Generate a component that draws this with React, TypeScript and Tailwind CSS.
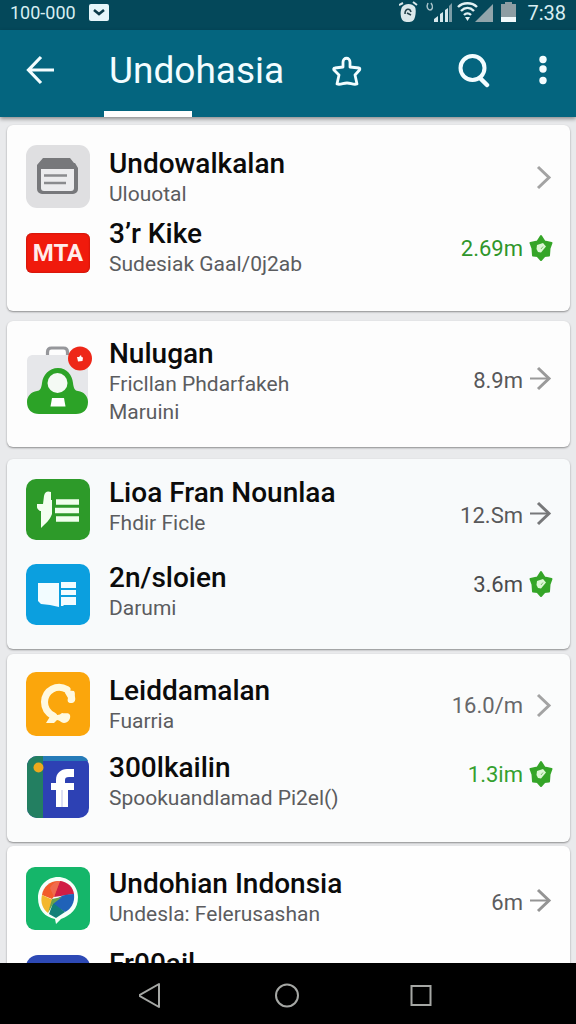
import type { ReactNode } from "react";

type Mark = "chevron" | "arrow" | "badge";

type Entry = {
  title: string;
  lines: string[];
  icon: ReactNode;
  iconPad: string;
  value?: string;
  valueColor?: string;
  mark?: Mark;
  markColor?: string;
  markPad?: string;
};

type Group = { id: string; className: string; entries: Entry[] };

function FolderIcon() {
  return (
    <svg className="block h-16 w-16" viewBox="0 0 64 64" aria-hidden="true">
      <rect width="64" height="63" rx="11" fill="#dfdfe1" />
      <path d="M17 13h27l4 5h1l3 5v21a5 5 0 0 1-5 5H16a5 5 0 0 1-5-5V20z" fill="#77787b" />
      <path d="M15 24h33v19a3 3 0 0 1-3 3H18a3 3 0 0 1-3-3z" fill="#ececee" />
      <path d="M18 30.500h23M18 38h22" stroke="#8a8b8e" strokeWidth="2.500" />
    </svg>
  );
}

function MtaIcon() {
  return (
    <span className="flex h-10 w-16 items-center justify-center rounded-md bg-[#f01a0c] text-2xl font-bold text-[#ffeceb] shadow-[inset_0_0_2px_#a01008]">
      MTA
    </span>
  );
}

function PersonIcon() {
  return (
    <svg className="block h-[70px] w-[66px]" viewBox="0 0 66 70" aria-hidden="true">
      <path d="M6 10h50a6 6 0 0 1 6 6v42H1V16a6 6 0 0 1 5-6z" fill="#e6e7ea" />
      <path d="M21.500 10V7c0-2.500 1-4 4-4h12c3 0 4 1.500 4 4v3" fill="none" stroke="#96979b" strokeWidth="3.200" />
      <path d="M32 23c9 0 14 7 15 15 .5 5 2 8 5 8 6 1 10 5 10 11 0 8-5 12-12 12H13C6 69 1 65 1 57c0-6 4-10 10-11 3 0 4.500-3 5-8 1-8 7-15 16-15z" fill="#2ca327" />
      <circle cx="31.500" cy="38" r="10" fill="#f4faf4" />
      <path d="M26 53h12l1.500 8.500h-15z" fill="#fff" />
      <circle cx="54" cy="13.500" r="12" fill="#ee2718" />
      <path d="M51 12h2l2-2 .5 2 1.500.5-.5 3.500-4.500.5z" fill="#fff" />
    </svg>
  );
}

function GreenListIcon() {
  return (
    <svg className="block h-16 w-16" viewBox="0 0 64 64" aria-hidden="true">
      <rect y="1" width="64" height="61" rx="10" fill="#2d9a29" />
      <path d="M18 18c1-5 4-5 7-4v8h1v14c-2 6-6 9-11 14v-17h-1c-1-1-3-2-3-4v-3h6z" fill="#f3fff0" />
      <path d="M30 24h23M29 32.500h24M30 41h23" stroke="#f0ffec" strokeWidth="5.500" />
    </svg>
  );
}

function BlueBookIcon() {
  return (
    <svg className="block h-16 w-16" viewBox="0 0 64 64" aria-hidden="true">
      <rect y="1" width="64" height="61" rx="10" fill="#0b9fdf" />
      <path d="M12 20h21v24l-9-2-9-1-3-3z" fill="#f2fcff" />
      <path d="M35 19h15v6H35zM35 27h15v5H35zM35 34h15v8H38l-1 1h-2z" fill="#f2fcff" />
    </svg>
  );
}

function OrangeIcon() {
  return (
    <svg className="block h-16 w-16" viewBox="0 0 64 64" aria-hidden="true">
      <rect width="64" height="64" rx="10" fill="#fba60c" />
      <path
        d="M41 17.500C31 12 19 18 18.500 30c0 6 3 11 9 14"
        fill="none"
        stroke="#fff9df"
        strokeWidth="7"
        strokeLinecap="round"
      />
      <path
        d="M40 14l3 4.500 5 .5c1.500 2 .5 4 1 6 1 4-1 6-4 6s-4-2-3-5l-3-5zM25 41c4 2 8 3 11 0 4 1 6-1 8 2 1 4-2 8-6 8-3 0-4-3-7-3l-3 3h-8l5-8z"
        fill="#fff9df"
      />
    </svg>
  );
}

function FacebookIcon() {
  return (
    <svg className="block h-16 w-16" viewBox="0 0 64 64" aria-hidden="true">
      <path d="M11 1h42a10 10 0 0 1 10 10v42a10 10 0 0 1-10 10H11A10 10 0 0 1 1 53V11A10 10 0 0 1 11 1z" fill="#2d41b4" />
      <path d="M17 1h36c5 0 8 2 9 5H17z" fill="#267bb8" />
      <path d="M11 1h6v62h-6A10 10 0 0 1 1 53V11A10 10 0 0 1 11 1z" fill="#237f61" />
      <circle cx="12.500" cy="12.500" r="5" fill="#eda91d" />
      <path d="M30 52V35h-5v-7h5v-3c0-7 5-11 11-11h7v8h-5c-3 0-4 1-4 3v3h9v7h-6v17z" fill="#fff" />
      <path d="M36 35v17" stroke="#a9b0e2" strokeWidth=".8" />
    </svg>
  );
}

function PinwheelIcon() {
  return (
    <svg className="block h-16 w-16" viewBox="0 0 64 64" aria-hidden="true">
      <rect width="64" height="63" rx="9" fill="#15b66a" />
      <path d="M32 10c11 0 20 9 20 20 0 12-7 18-17 22l-5 5-1-5c-10-2-17-9-17-21 0-12 9-21 20-21z" fill="#f6fff9" />
      <path d="M32 14c-8 0-15 6-16 14l10 4 13-16a16 16 0 0 0-7-2z" fill="#f25c2a" />
      <path d="M34 14c8 1 13 6 14 13l-20 3z" fill="#d01e45" />
      <path d="M34 14l-6 16-4-9c2-4 6-7 10-7z" fill="#f06a4c" />
      <path d="M48 27c1 9-3 15-9 18l-13-8c5-6 10-10 22-10z" fill="#2062b8" />
      <path d="M27 36l12 9-9 6-7-4z" fill="#118078" />
      <path d="M16 28l11 5-5 13c-5-4-8-10-6-18z" fill="#f3b72c" />
      <path d="M26 32l-4 14 5-9 9-7z" fill="#6aa24b" />
    </svg>
  );
}

function BlueIcon() {
  return <span className="block h-16 w-16 rounded-xl bg-[#2d49b5]" />;
}

function MarkIcon({ mark, color }: { mark: Mark; color: string }) {
  if (mark === "badge") {
    return (
      <svg className="h-7 w-6 shrink-0" viewBox="0 0 24 28" aria-hidden="true">
        <path
          d="M12 2l3.500 5.500L22.500 9l-2 5.500L20 21.500l-4.500.5-3.500 4-3.500-4-4.500-.5-.5-7L1.500 9l7-1.500z"
          fill="#35a528"
          stroke="#35a528"
          strokeWidth="2"
          strokeLinejoin="round"
        />
        <path d="M8 11l6-2 3 3.500-5 6-3-.5-1.500-3z" fill="#dcf7d4" />
        <path d="M12 15l2-2.500" stroke="#79bf6c" strokeWidth="1" />
      </svg>
    );
  }
  return (
    <svg className={`h-7 w-6 shrink-0 ${color}`} viewBox="0 0 24 28" fill="none" stroke="currentColor" strokeWidth="3" aria-hidden="true">
      {mark === "arrow" ? (
        <>
          <path d="M1 12.500h18" strokeWidth="2" />
          <path d="M9 2l11 10.500L9 23" />
        </>
      ) : (
        <path d="M9 4l11 10.500L9 25" />
      )}
    </svg>
  );
}

const groups: Group[] = [
  {
    id: "a",
    className: "mt-2 gap-1 pt-[18px] pb-[33px] bg-[#fdfdfd]",
    entries: [
      { title: "Undowalkalan", lines: ["Ulouotal"], icon: <FolderIcon />, iconPad: "pt-0.5", mark: "chevron", markColor: "text-[#a3a3a3]", markPad: "pt-5" },
      { title: "3’r Kike", lines: ["Sudesiak Gaal/0j2ab"], icon: <MtaIcon />, iconPad: "pt-5", value: "2.69m", valueColor: "text-[#2f962b]", mark: "badge", markPad: "pt-5" },
    ],
  },
  {
    id: "b",
    className: "mt-2.5 pt-3 pb-[21px] bg-[#fdfdfd]",
    entries: [
      { title: "Nulugan", lines: ["Fricllan Phdarfakeh", "Maruini"], icon: <PersonIcon />, iconPad: "pt-3", value: "8.9m", valueColor: "text-[#58585a]", mark: "arrow", markColor: "text-[#9a9a9a]", markPad: "pt-8" },
    ],
  },
  {
    id: "c",
    className: "mt-3 gap-[15px] pt-[13px] pb-[22px] bg-[#f8fafb]",
    entries: [
      { title: "Lioa Fran Nounlaa", lines: ["Fhdir Ficle"], icon: <GreenListIcon />, iconPad: "pt-1.5", value: "12.Sm", valueColor: "text-[#58585a]", mark: "arrow", markColor: "text-[#77787a]", markPad: "pt-7" },
      { title: "2n/sloien", lines: ["Darumi"], icon: <BlueBookIcon />, iconPad: "pt-1.5", value: "3.6m", valueColor: "text-[#4a4a4c]", mark: "badge", markPad: "pt-3" },
    ],
  },
  {
    id: "d",
    className: "mt-[5px] gap-[11px] pt-4 pb-[23px] bg-[#fbfcfc]",
    entries: [
      { title: "Leiddamalan", lines: ["Fuarria"], icon: <OrangeIcon />, iconPad: "pt-0.5", value: "16.0/m", valueColor: "text-[#66676a]", mark: "chevron", markColor: "text-[#a3a3a3]", markPad: "pt-5" },
      { title: "300lkailin", lines: ["Spookuandlamad Pi2el()"], icon: <FacebookIcon />, iconPad: "pt-2", value: "1.3im", valueColor: "text-[#35a02f]", mark: "badge", markPad: "pt-3" },
    ],
  },
  {
    id: "e",
    className: "mt-1 gap-3 pt-[17px] pb-6 bg-[#fefefe]",
    entries: [
      { title: "Undohian Indonsia", lines: ["Undesla: Felerusashan"], icon: <PinwheelIcon />, iconPad: "pt-1", value: "6m", valueColor: "text-[#5c5c5e]", mark: "arrow", markColor: "text-[#949494]", markPad: "pt-6" },
      { title: "Fr00ail", lines: [], icon: <BlueIcon />, iconPad: "pt-3" },
    ],
  },
];

function Row({ entry }: { entry: Entry }) {
  return (
    <li className="flex items-start">
      <div className={`w-[83px] shrink-0 ${entry.iconPad}`}>{entry.icon}</div>
      <div className="min-w-0 flex-1 pt-[5px]">
        <h2 className="truncate text-[28px] leading-8 font-medium text-[#0b0b0b]">{entry.title}</h2>
        {entry.lines.map((line) => (
          <p key={line} className="truncate text-[21px] leading-7 text-[#5b5c5f]">
            {line}
          </p>
        ))}
      </div>
      {entry.mark && (
        <div className={`flex shrink-0 items-center gap-1.5 ${entry.markPad ?? ""}`}>
          {entry.value && <span className={`pt-0.5 text-[22px] leading-7 ${entry.valueColor ?? ""}`}>{entry.value}</span>}
          <MarkIcon mark={entry.mark} color={entry.markColor ?? ""} />
        </div>
      )}
    </li>
  );
}

function StatusBar() {
  return (
    <div className="flex h-[30px] shrink-0 items-center bg-[#04485a] px-[10px] pb-1 text-[#d8eef2]">
      <span className="text-lg leading-6">100-000</span>
      <svg className="ml-[13px] h-5 w-5" viewBox="0 0 20 20" aria-hidden="true">
        <rect y="1" width="20" height="17" rx="2" fill="#e6f6fa" />
        <path d="M5 7l5 4 5-4" fill="none" stroke="#0b3a48" strokeWidth="2.600" />
      </svg>
      <svg className="ml-auto h-6 w-[120px]" viewBox="0 0 120 24" aria-hidden="true">
        <path d="M3 6c3-4 10-4 13 0 1 2 1 6 0 10-1 4-3 5-7 5s-6-1-7-5c-1-4 0-8 1-10z" fill="#dbe8eb" />
        <path d="M0 4l4-2M14 1l4 3" stroke="#dbe8eb" strokeWidth="2" />
        <path d="M6 13c0-6 5-6 6-2M8 12l4 2" stroke="#24414a" strokeWidth="1.600" fill="none" />
        <path d="M29 2c-2 4 0 7 2 7s4-3 1-7" stroke="#a9c3ca" strokeWidth="1.500" fill="none" />
        <path d="M35 21v-3l4-3v6zM41 21v-8l3-2v10zM46 21V9l3-2v14z" fill="#d7e8ec" />
        <path d="M50 21V5l3-3v19z" fill="#7c9da7" />
        <path d="M59 6c5-5 14-5 19 0M62 10c4-4 9-4 13 0M65 14c2-2 5-2 7 0" stroke="#e2f1f4" strokeWidth="2.400" fill="none" />
        <path d="M68.500 20l-2.500-4h5z" fill="#e2f1f4" />
        <path d="M76 21L94 3v18z" fill="#91a5ab" />
        <path d="M102 3h4V1h7v2h4v18h-15z" fill="#8d9da3" />
        <path d="M102 16h15v5h-15z" fill="#f1fafc" />
      </svg>
      <span className="ml-2 text-xl leading-6">7:38</span>
    </div>
  );
}

function AppBar() {
  return (
    <header className="relative z-10 flex h-[87px] shrink-0 bg-[#04657f] pr-[21px] pl-[26px] text-[#f3fdff] shadow-[0_2px_4px_rgba(0,0,0,0.4)]">
      <button type="button" aria-label="Back" className="flex h-20 w-[78px] items-center">
        <svg className="h-8 w-7" viewBox="0 0 28 32" fill="none" stroke="currentColor" strokeWidth="3.200">
          <path d="M15 3L2.500 16 15 29M2.500 16H28" />
        </svg>
      </button>
      <div className="flex flex-col justify-between">
        <h1 className="pt-[17px] pl-[5px] text-[37px] leading-[48px]">Undohasia</h1>
        <span className="h-1.5 w-[88px] bg-white" />
      </div>
      <button type="button" aria-label="Favourite" className="ml-[47px] flex h-[84px] w-8 items-center">
        <svg className="h-8 w-8" viewBox="0 0 32 32" fill="none" stroke="currentColor" strokeWidth="2.800" strokeLinejoin="round">
          <path d="M12 11V6c0-5 7-5 7 0v5l9 1c1 0 1 1 .5 2L24 19l2 9c-4 1-6-1-10-1s-6 2-10 1l2-9-5-5c-.5-1-.5-2 1-2z" />
        </svg>
      </button>
      <button type="button" aria-label="Search" className="ml-auto flex h-20 w-8 items-center">
        <svg className="h-9 w-8" viewBox="0 0 32 36" fill="none" stroke="currentColor" strokeWidth="4">
          <circle cx="14.500" cy="16" r="12" />
          <path d="M22 26l7 7" strokeWidth="4.500" strokeLinecap="round" />
        </svg>
      </button>
      <button type="button" aria-label="More options" className="ml-[41px] flex h-20 w-6 items-center justify-center">
        <svg className="h-8 w-6" viewBox="0 0 24 32" fill="currentColor">
          <circle cx="12" cy="5.500" r="3.700" />
          <circle cx="12" cy="15" r="3.700" />
          <circle cx="12" cy="26.500" r="3.700" />
        </svg>
      </button>
    </header>
  );
}

function NavBar() {
  return (
    <nav className="flex h-[61px] shrink-0 items-center justify-center gap-[106px] bg-black pt-1 pr-0.5 text-[#a5a7a4]">
      <button type="button" aria-label="Back">
        <svg className="block h-7 w-7" viewBox="0 0 28 28" fill="none" stroke="currentColor" strokeWidth="2">
          <path d="M20 2v23L0 13.500z" strokeLinejoin="round" />
        </svg>
      </button>
      <button type="button" aria-label="Home">
        <svg className="block h-7 w-7" viewBox="0 0 28 28" fill="none" stroke="currentColor" strokeWidth="2">
          <circle cx="14" cy="13.500" r="11" />
        </svg>
      </button>
      <button type="button" aria-label="Recent apps">
        <svg className="block h-7 w-7" viewBox="0 0 28 28" fill="none" stroke="currentColor" strokeWidth="2">
          <rect x="4.500" y="4" width="19" height="19" />
        </svg>
      </button>
    </nav>
  );
}

export default function App() {
  return (
    <div className="flex h-screen flex-col overflow-hidden bg-[#e9eaec] font-['Roboto',sans-serif]">
      <StatusBar />
      <AppBar />
      <main className="min-h-0 flex-1 overflow-hidden pr-1.5 pl-[7px]">
        {groups.map((group) => (
          <ul key={group.id} className={`flex flex-col rounded-md pr-[17px] pl-[19px] shadow-[0_1px_2px_rgba(0,0,0,0.4)] ${group.className}`}>
            {group.entries.map((entry) => (
              <Row key={entry.title} entry={entry} />
            ))}
          </ul>
        ))}
      </main>
      <NavBar />
    </div>
  );
}
